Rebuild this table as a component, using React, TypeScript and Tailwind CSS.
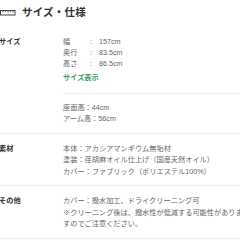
import React from "react";

function Ruler() {
  return (
    <svg width="16" height="7" viewBox="0 0 16 7" className="block shrink-0">
      <rect x="0.5" y="1.5" width="14.5" height="4.5" fill="none" stroke="#444" strokeWidth="1" />
      <path d="M3 1.5V3.5M5.5 1.5V3M8 1.5V3.5M10.5 1.5V3M13 1.5V3.5" stroke="#444" strokeWidth="0.9" />
    </svg>
  );
}

export default function App() {
  return (
    <div className="w-[240px] h-[240px] overflow-hidden bg-white text-[#333] font-[Liberation_Sans,Noto_Sans_CJK_JP,sans-serif]">
      <div className="w-[260px]">
        <div className="flex items-center h-[24px] gap-[6px]">
          <Ruler />
          <span className="text-[10.5px] font-bold leading-none tracking-[0.2px]">サイズ・仕様</span>
        </div>

        <div className="flex pt-[12px] pb-[9px] border-b border-[#eeeeee] text-[7.2px] leading-[11px]">
          <div className="w-[64px] ml-[-1px] font-bold text-[#333]">サイズ</div>
          <div className="w-[182px] text-[#666]">
            <div className="grid grid-cols-[27px_9px_1fr]">
              <span>幅</span><span>:</span><span>157cm</span>
              <span>奥行</span><span>:</span><span>83.5cm</span>
              <span>高さ</span><span>:</span><span>86.5cm</span>
            </div>
            <div className="mt-[3px] font-bold text-[#3f9b6f]">サイズ表示</div>
            <div className="mt-[10px] border-t border-[#eeeeee] pt-[7.5px]">
              <div>座面高：44cm</div>
              <div>アーム高：56cm</div>
            </div>
          </div>
        </div>

        <div className="flex pt-[9px] pb-[8px] border-b border-[#eeeeee] text-[7.2px] leading-[11.5px]">
          <div className="w-[64px] ml-[-1px] font-bold text-[#333]">素材</div>
          <div className="w-[182px] text-[#666]">
            <div>本体：アカシアマンギウム無垢材</div>
            <div>塗装：荏胡麻オイル仕上げ（国産天然オイル）</div>
            <div>カバー：ファブリック（ポリエステル100%）</div>
          </div>
        </div>

        <div className="flex pt-[9px] pb-[8px] border-b border-[#eeeeee] text-[7.2px] leading-[11.5px]">
          <div className="w-[64px] ml-[-1px] font-bold text-[#333]">その他</div>
          <div className="w-[182px] text-[#666]">
            <div>カバー：撥水加工、ドライクリーニング可</div>
            <div>※クリーニング後は、撥水性が低減する可能性がありますのでご注意ください。</div>
          </div>
        </div>
      </div>
    </div>
  );
}
